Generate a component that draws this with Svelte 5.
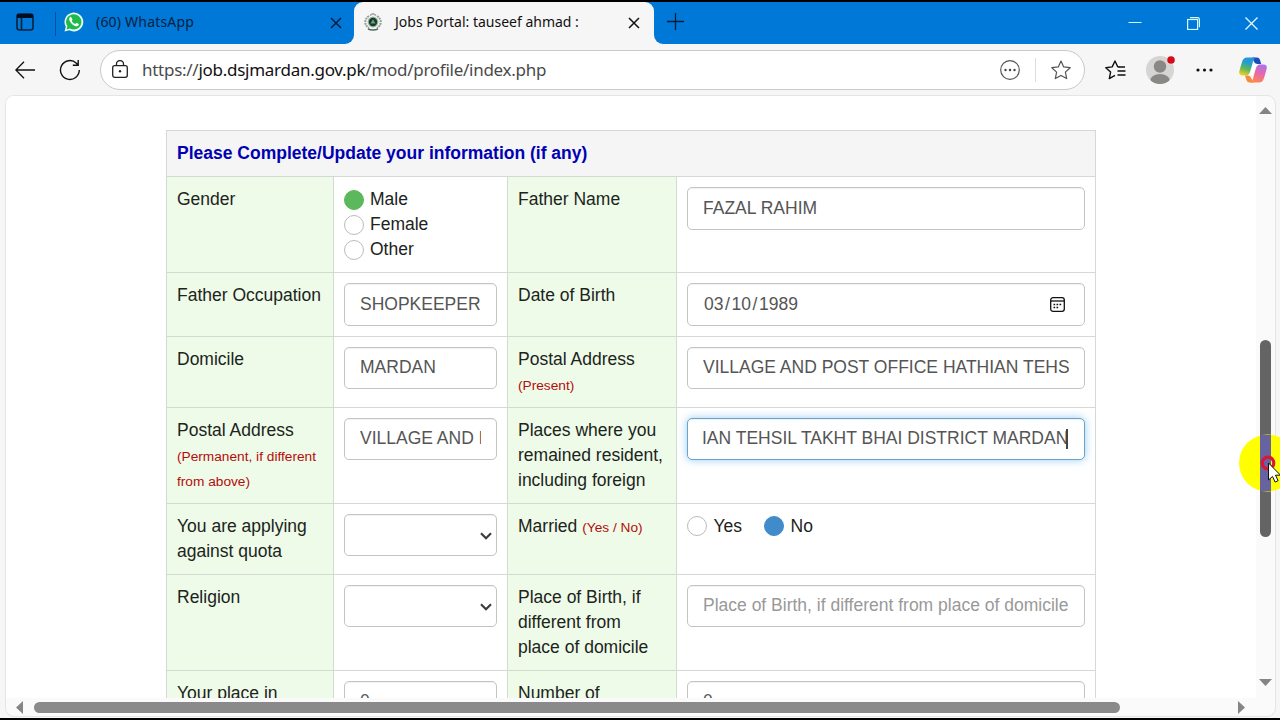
<script>
  const rows = [
    { h: 96, label: 'Gender', radios: ['Male', 'Female', 'Other'], label2: 'Father Name', value2: 'FAZAL RAHIM', tall: true },
    { h: 64, label: 'Father Occupation', value: 'SHOPKEEPER', label2: 'Date of Birth', value2: '03/10/1989', date: true, tall: true },
    { h: 71, label: 'Domicile', value: 'MARDAN', label2: 'Postal Address', note2: '(Present)', value2: 'VILLAGE AND POST OFFICE HATHIAN TEHS' },
    { h: 96, label: 'Postal Address', note: '(Permanent, if different from above)', value: 'VILLAGE AND P', label2: 'Places where you remained resident, including foreign', value2: 'IAN TEHSIL TAKHT BHAI DISTRICT MARDAN', focus: true },
    { h: 71, label: 'You are applying against quota', select: true, label2: 'Married', note2: '(Yes / No)', inlineNote: true, married: true },
    { h: 96, label: 'Religion', select: true, label2: 'Place of Birth, if different from place of domicile', placeholder: 'Place of Birth, if different from place of domicile' },
    { h: 96, label: 'Your place in', value: '0', label2: 'Number of', value2: '0' }
  ];
</script>

<div class="screen">
  <div class="tabs">
    <div class="blue left">
      <svg class="workspace" width="18" height="18" viewBox="0 0 18 18" fill="none" stroke="#08213d" stroke-width="1.6"><rect x="1" y="1" width="16" height="16" rx="2.5"/><path d="M5.5 5v12"/><path d="M1 3h16" stroke="#000d22" stroke-width="4"/></svg>
      <i class="sep"></i>
      <svg class="wa" width="20" height="20" viewBox="0 0 20 20"><path d="M.5 19.5 1.8 14.8A9.4 9.4 0 1 1 5.3 18.2Z" fill="#e9fff0"/><path d="M2.5 17.5l.9-3.2A7.7 7.7 0 1 1 5.9 16.6Z" fill="#1fba4c"/><path d="M7.2 5.3c-.4-.8-1-.4-1.5.2-1.7 2 1 5.2 2.8 6.9 2 1.7 4.8 2.8 6 .9.5-.8.3-1.2-.2-1.5l-1.6-.8c-.8-.4-1 .8-1.6 1-.9.1-3.5-2.5-3.4-3.2.1-.5 1-.8.7-1.5z" fill="#fff"/></svg>
      <span class="t1">(60) WhatsApp</span>
      <svg class="x1" width="12" height="12" viewBox="0 0 12 12" stroke="#071c38" stroke-width="1.5"><path d="M1 1l10 10M11 1 1 11"/></svg>
    </div>
    <div class="active">
      <svg class="crest" width="18" height="18" viewBox="0 0 18 18" fill="none"><path d="M5 3C0 6 0 12 5 15M13 3c5 3 5 9 0 12" stroke="#8da396" stroke-width="2" stroke-dasharray="2 .7"/><circle cx="9" cy="9" r="5.4" fill="#9eb5a6"/><circle cx="9" cy="9" r="4.2" fill="#173d2b"/><path d="M6.5 10.5h5L9 6.2z" fill="#6fa07f"/><path d="M6 2.4l3-1.7 3 1.7" stroke="#9aa79f" stroke-width="1.5"/><path d="M4 16q5 2 10 0" stroke="#526b5a" stroke-width="1.6"/></svg>
      <span class="t2">Jobs Portal: tauseef ahmad :</span>
      <svg class="x2" width="12" height="12" viewBox="0 0 12 12" stroke="#111" stroke-width="1.5"><path d="M1 1l10 10M11 1 1 11"/></svg>
    </div>
    <div class="blue right">
      <svg class="plus" width="17" height="17" viewBox="0 0 17 17" stroke="#071c38" stroke-width="1.3"><path d="M8.5 0v17M0 8.500h17"/></svg>
      <svg class="min" width="14" height="14" viewBox="0 0 14 14" stroke="#d5fbff"><path d="M.5 7.5h13"/></svg>
      <svg class="max" width="13" height="13" viewBox="0 0 13 13" fill="none" stroke="#d5fbff" stroke-width="1.2"><rect x=".6" y="2.5" width="10" height="10"/><path d="M3 .6h7.600q1.800 0 1.800 1.800v7.800"/></svg>
      <svg class="close" width="13" height="13" viewBox="0 0 13 13" stroke="#e3fdff" stroke-width="1.3"><path d="M.5.5l12 12M12.5.5l-12 12"/></svg>
    </div>
  </div>

  <div class="toolbar">
    <svg class="back" width="20" height="18" viewBox="0 0 20 18" fill="none" stroke="#111" stroke-width="1.3"><path d="M9 .8.9 9 9 17.2M1 9h19"/></svg>
    <svg class="reload" width="22" height="22" viewBox="0 0 22 22" fill="none" stroke="#111" stroke-width="1.4"><path d="M20.300 11A9.400 9.400 0 1 1 17.400 4.200L19 5.800M19.200 1v5.200h-5.400"/></svg>
    <div class="address">
      <svg class="lock" width="16" height="18" viewBox="0 0 16 18" fill="none" stroke="#222" stroke-width="1.3"><rect x=".7" y="5.7" width="14.6" height="11.6" rx="2"/><path d="M4.5 5.5V4a3.500 3.500 0 0 1 7 0v1.500"/><circle cx="8" cy="11.3" r="1.2" fill="#222" stroke="none"/></svg>
      <span class="url"><em>https://</em>job.dsjmardan.gov.pk<em>/mod/profile/index.php</em></span>
      <svg class="info" width="20" height="20" viewBox="0 0 20 20" fill="none" stroke="#555" stroke-width="1.2"><circle cx="10" cy="10" r="9.3"/><g fill="#444" stroke="none"><circle cx="5.5" cy="10" r="1.2"/><circle cx="10" cy="10" r="1.2"/><circle cx="14.5" cy="10" r="1.2"/></g></svg>
      <i class="asep"></i>
      <svg class="star" width="20" height="20" viewBox="0 0 20 20" fill="none" stroke="#555" stroke-width="1.2" stroke-linejoin="round"><path d="m10 1 2.700 5.900 6.500.8-4.800 4.400 1.300 6.500-5.700-3.200-5.700 3.200 1.300-6.500L.8 7.700l6.500-.8z"/></svg>
    </div>
    <svg class="fav" width="22" height="20" viewBox="0 0 22 20" fill="none" stroke="#111" stroke-width="1.4" stroke-linejoin="round"><path d="M14.500 6.900l-1.800-.2L10 1 7.200 6.900.8 7.700l4.800 4.400-1.300 6.500 5.700-3.200"/><path d="M13.500 7h6.500M12.500 11h8M12.500 15h8"/></svg>
    <svg class="avatar" width="30" height="30" viewBox="0 0 30 30"><defs><clipPath id="face"><circle cx="14" cy="16" r="14"/></clipPath></defs><circle cx="14" cy="16" r="14" fill="#d6d5d4"/><g fill="#898884" clip-path="url(#face)"><circle cx="14" cy="12.5" r="6.2"/><ellipse cx="14" cy="27" rx="10" ry="7"/></g><circle cx="25" cy="6" r="4.3" fill="#f6f6f6"/><circle cx="25" cy="6" r="3.8" fill="#d60b18"/></svg>
    <svg class="dots" width="17" height="4" viewBox="0 0 17 4" fill="#111"><circle cx="2" cy="2" r="1.6"/><circle cx="8.5" cy="2" r="1.6"/><circle cx="15" cy="2" r="1.6"/></svg>
    <svg class="copilot" width="28" height="26" viewBox="0 0 28 26">
      <defs>
        <linearGradient id="cl" x1=".6" y1="0" x2=".3" y2="1"><stop stop-color="#2c8fe8"/><stop offset=".3" stop-color="#20a0c8"/><stop offset=".65" stop-color="#62b856"/><stop offset="1" stop-color="#f0d024"/></linearGradient>
        <linearGradient id="cr" x1=".6" y1="0" x2=".3" y2="1"><stop stop-color="#b070ee"/><stop offset=".5" stop-color="#ea68a4"/><stop offset="1" stop-color="#ff8a4c"/></linearGradient>
      </defs>
      <path d="M13 .5h5q2.400 0 3.200 3l1 3.500h-3.500q-3 0-4-3z" fill="#194fb8"/>
      <path d="M8 .5h9q-2 .3-3 4L11 15q-1.100 3.500-4.500 3.500H3.500q-4.300 0-3-5l2.500-8.500Q4.200.5 8 .5z" fill="url(#cl)"/>
      <path d="M6 18.500h4.500l2.500 4q.6 2.500 3 3h-5.500q-2.500 0-3.200-2.700z" fill="#f38c3b"/>
      <path d="M21 7.500h3.500q4.300 0 3 5L25 21q-1.300 4.500-5 4.500h-9q2-.3 3-4L17 11q1.100-3.500 4-3.500z" fill="url(#cr)"/>
      <path d="M16 7.500h3.500q-2.300.5-3.200 3.500l-1.800 5q-.8 2.500-3 2.500H9q1.800-.6 2.600-3.200l1.600-5q.8-2.800 2.800-2.800z" fill="#fff"/>
    </svg>
  </div>

  <div class="page">
    <div class="viewport">
      <div class="form">
        <div class="heading">Please Complete/Update your information (if any)</div>
        {#each rows as r}
          <div class="row" class:tall={r.tall} style:height="{r.h}px">
            <div class="label">{r.label}{#if r.note}<br /><small>{r.note}</small>{/if}</div>
            <div class="cell">
              {#if r.radios}
                {#each r.radios as name, i}
                  <div class="radio"><i class:green={i === 0}></i>{name}</div>
                {/each}
              {:else if r.select}
                <div class="input select"><svg width="12" height="8" viewBox="0 0 12 8" fill="none" stroke="#3c3c3c" stroke-width="2.2"><path d="M1 1.200l5 5 5-5"/></svg></div>
              {:else}
                <div class="input"><span>{r.value}</span></div>
              {/if}
            </div>
            <div class="label">{r.label2}{#if r.note2}{#if r.inlineNote}{' '}{:else}<br />{/if}<small>{r.note2}</small>{/if}</div>
            <div class="cell">
              {#if r.married}
                <div class="pair"><div class="radio"><i></i><b>Yes</b></div><div class="radio"><i class="azure"></i><b>No</b></div></div>
              {:else}
                <div class="input" class:focus={r.focus} class:date={r.date}>
                  {#if r.date}
                    <span>{#each r.value2.split('/') as part, i}{#if i}<u>/</u>{/if}{part}{/each}</span>
                    <svg width="15" height="15" viewBox="0 0 15 15" fill="none" stroke="#111" stroke-width="1.3"><rect x=".7" y=".7" width="13.6" height="13.6" rx="2.3"/><path d="M.7 4h13.600"/><path d="M3.500 7.500h8M3.500 10.500h5.500" stroke-width="1.6" stroke-dasharray="1.7 1.3"/></svg>
                  {:else}
                    <span class:hint={r.placeholder}>{r.value2 ?? r.placeholder}</span>
                    {#if r.focus}<i class="caret"></i>{/if}
                  {/if}
                </div>
              {/if}
            </div>
          </div>
        {/each}
      </div>
    </div>
    <div class="vbar">
      <svg width="13" height="7" viewBox="0 0 13 7" fill="#858585"><path d="M0 7 6.500 0 13 7z"/></svg>
      <div class="vthumb"></div>
      <svg class="down" width="13" height="7" viewBox="0 0 13 7" fill="#858585"><path d="M0 0h13L6.500 7z"/></svg>
    </div>
    <div class="hbar">
      <svg width="7" height="13" viewBox="0 0 7 13" fill="#858585"><path d="M7 0v13L0 6.500z"/></svg>
      <div class="hthumb"></div>
      <svg class="next" width="7" height="13" viewBox="0 0 7 13" fill="#858585"><path d="M0 0v13l7-6.500z"/></svg>
    </div>
  </div>

  <svg class="pointer" width="42" height="58" viewBox="0 0 42 58">
    <circle cx="29.5" cy="29" r="28.5" fill="#ff0"/>
    <rect x="22" y="1" width="11" height="56" fill="#6762a0"/>
    <circle cx="30" cy="29" r="5.8" fill="none" stroke="#db1534" stroke-width="3.2"/>
    <path d="M30.500 29v17l4-3.600 2.600 5.700 3-1.400-2.600-5.500h5z" fill="#fff" stroke="#111" stroke-width="1"/>
  </svg>
</div>

<style>
  :global(body) { margin: 0; overflow: hidden; }
  * { box-sizing: border-box; }
  svg { display: block; flex: none; }
  .screen { position: relative; width: 1280px; height: 720px; overflow: hidden; background: #f6f6f6; border-top: 2px solid #000; border-bottom: 2px solid #000; display: flex; flex-direction: column; font-family: 'Liberation Sans', Arial, sans-serif; }
  .tabs { height: 42px; display: flex; flex: none; background: linear-gradient(#0078d7 50%, #f6f6f6 50%); font-family: 'Noto Sans', sans-serif; }
  .blue { background: #0078d7; display: flex; align-items: center; padding-bottom: 2px; }
  .left { width: 354px; border-bottom-right-radius: 9px; padding-left: 16px; }
  .sep { width: 1px; height: 24px; background: #07509a; margin: 3px 8px 0 21px; }
  .t1, .t2 { font-size: 14px; line-height: 20px; white-space: nowrap; }
  .t1 { margin-left: 12px; width: 101px; color: #08213d; letter-spacing: .2px; }
  .wa { margin-top: -1px; }
  .x1 { margin-left: 133px; margin-top: 1px; }
  .active { width: 300px; background: #f6f6f6; border-radius: 9px 9px 0 0; display: flex; align-items: center; padding: 0 0 2px 10px; }
  .t2 { width: 190px; margin-left: 13px; color: #111; }
  .x2 { margin-left: 43px; margin-top: 1px; }
  .right { flex: 1; border-bottom-left-radius: 9px; padding-left: 13px; }
  .plus { margin-top: -1px; }
  .min { margin-left: 444px; }
  .max { margin-left: 45px; margin-top: 3px; }
  .close { margin-left: 45px; margin-top: 3px; }
  .toolbar { height: 51px; flex: none; display: flex; align-items: center; padding-left: 15px; }
  .reload { margin-left: 24px; }
  .address { width: 985px; height: 40px; border: 1px solid #c9c9c9; background: #fff; border-radius: 20px; margin-left: 19px; display: flex; align-items: center; padding-left: 11px; }
  .lock { margin-top: -2px; }
  .url { width: 420px; margin-left: 14px; font: 17px/24px 'Noto Sans', sans-serif; letter-spacing: -.27px; color: #111; white-space: nowrap; }
  em { font-style: normal; color: #4a4a4a; }
  .info { margin-left: 438px; }
  .asep { width: 1px; height: 24px; background: #ddd; margin-left: 15px; }
  .star { margin-left: 15px; margin-top: 1px; }
  .fav { margin-left: 20px; }
  .avatar { margin-left: 19px; margin-top: -2px; }
  .dots { margin-left: 20px; margin-top: 1px; }
  .copilot { margin-left: 26px; }
  .page { width: 1271px; height: 622px; margin-left: 5px; flex: none; border: 1px solid #e5e5e5; border-radius: 9px; background: #fafafa; overflow: hidden; display: grid; grid-template-columns: 1250px 19px; grid-template-rows: 602px 18px; }
  .viewport { overflow: hidden; background: #fff; padding: 34px 0 0 160px; }
  .form { width: 930px; border: 1px solid #d5d9d5; font-size: 17.5px; line-height: 25px; color: #1c241c; }
  .heading { height: 46px; padding: 10px; border-bottom: 1px solid #d5d9d5; background: #f5f5f5; font-weight: bold; color: #0000b4; }
  .row { display: grid; grid-template-columns: 167px 174px 169px 418px; grid-template-rows: 100%; border-bottom: 1px solid #d3d9d3; }
  .label { padding: 10px 9px 10px 10px; background: #eefbe8; border-right: 1px solid #d3d9d3; }
  .cell { padding: 10px; border-right: 1px solid #d3d9d3; min-width: 0; }
  .cell:last-child { border-right: 0; }
  small { font-size: 13.7px; line-height: 1; color: #b50c0c; }
  .radio { display: flex; align-items: center; gap: 6px; height: 25px; }
  .radio i { width: 20px; height: 20px; border-radius: 50%; border: 1px solid #bbb; background: #fff; margin-top: 1px; }
  .radio .green { background: #5cb85c; border-color: #5cb85c; }
  .radio .azure { background: #428bca; border-color: #428bca; }
  .pair { display: flex; gap: 22px; margin-top: -1px; }
  .pair .radio { gap: 6.5px; }
  .pair b { font-weight: normal; padding-top: 2px; }
  .input { height: 42px; border: 1px solid #c4c4c4; border-radius: 5px; background: #fff; padding: 0 15px; display: flex; align-items: center; color: #555; box-shadow: inset 0 1px 1px rgba(0,0,0,.06); }
  .tall .input { height: 43px; }
  .input span { overflow: hidden; white-space: nowrap; flex: 1; padding-bottom: 1px; }
  .input .hint { color: #999; }
  .tall .input span { padding-bottom: 0; }
  .date { padding: 0 19px 0 16px; }
  u { text-decoration: none; margin: 0 1.6px; }
  .select { justify-content: flex-end; padding: 2px 4px 0 0; }
  .focus { border-color: #66a3cf; box-shadow: inset 0 1px 1px rgba(0,0,0,.06), 0 0 9px rgba(102,175,233,.65); padding-left: 14px; }
  .input.focus span { flex: none; }
  .caret { width: 2px; height: 20px; background: #444; margin-left: -2px; }
  .vbar { display: flex; flex-direction: column; padding: 11px 0 0 3px; }
  .vthumb { width: 11px; height: 197px; border-radius: 6px; background: #646464; margin: 226px 0 0 1px; }
  .down { margin-top: 142px; }
  .hbar { grid-column: 1 / 3; display: flex; align-items: center; padding-left: 10px; }
  .hthumb { width: 1086px; height: 11px; border-radius: 6px; background: #8a8a8a; margin-left: 11px; }
  .next { margin-left: 118px; }
  .pointer { position: absolute; left: 1238px; top: 432px; }
</style>
